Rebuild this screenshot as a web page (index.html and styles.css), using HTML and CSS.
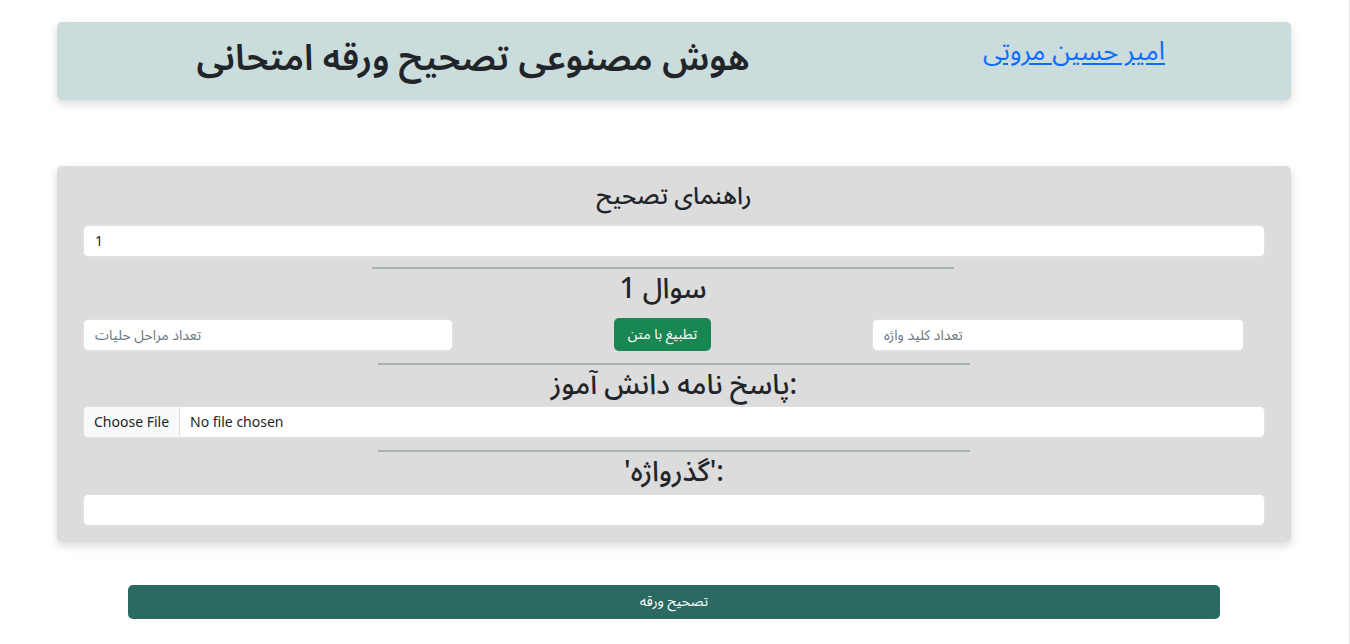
FILE: index.html
```html
<!DOCTYPE html>
<html lang="fa" dir="rtl">
<head>
    <meta charset="UTF-8">
    <meta name="viewport" content="width=device-width, initial-scale=1.0">
    <title>هوش مصنوعی تصحیح ورقه امتحانی</title>
    <link rel="stylesheet" href="styles.css">
</head>
<body>
    <header class="top-card">
        <div class="author"><a href="#">امیر حسین مروتی</a></div>
        <h1 class="title">هوش مصنوعی تصحیح ورقه امتحانی</h1>
    </header>

    <main class="form-card">
        <h3 class="guide-title">راهنمای تصحیح</h3>
        <input type="text" class="field field-ltr" value="1">

        <hr class="divider divider-first">
        <h2 class="question-title">سوال 1</h2>
        <div class="question-row">
            <input type="text" class="field field-ltr" placeholder="تعداد کلید واژه">
            <div class="match-cell">
                <button class="btn-match">تطبیغ با متن</button>
            </div>
            <input type="text" class="field field-ltr" placeholder="تعداد مراحل حلیات">
        </div>

        <hr class="divider">
        <h2 class="section-title" dir="ltr">پاسخ نامه دانش آموز:</h2>
        <div class="file-field" dir="ltr">
            <span class="file-btn">Choose File</span>
            <span class="file-name">No file chosen</span>
        </div>

        <hr class="divider">
        <h2 class="section-title" dir="ltr">'گذرواژه':</h2>
        <input type="password" class="field">
    </main>

    <div class="submit-wrap">
        <button class="btn-submit">تصحیح ورقه</button>
    </div>
</body>
</html>
```

FILE: styles.css
```css
html {
    direction: rtl;
}
body {
    margin: 0;
    padding: 22px 58px 24px 57px;
    font-family: "Noto Sans", "Noto Sans Arabic", "DejaVu Sans", sans-serif;
    color: #212529;
    background: #fff;
    border-right: 1px solid #e6e6e6;
    min-height: 100vh;
    box-sizing: border-box;
}
.top-card {
    background: #cadcdb;
    border-radius: 5px;
    box-shadow: 0 4px 10px rgba(0, 0, 0, 0.15);
    height: 78px;
    display: grid;
    grid-template-columns: 412px 1fr;
}
.author {
    text-align: center;
    padding-top: 2px;
    padding-right: 22px;
}
.author a {
    color: #0d6efd;
    font-size: 26px;
    text-decoration: underline;
    text-underline-offset: 3px;
}
.title {
    margin: 0;
    text-align: center;
    font-size: 36px;
    font-weight: 600;
    padding-top: 13px;
    padding-left: 10px;
    line-height: 1.2;
}
.form-card {
    margin-top: 66px;
    background: #dcdcdc;
    border-radius: 5px;
    box-shadow: 0 4px 10px rgba(0, 0, 0, 0.15);
    padding: 15px 26px 16px 26px;
}
.guide-title {
    margin: 0 0 15px;
    text-align: center;
    font-size: 24px;
    font-weight: 500;
    line-height: 1.2;
}
.field {
    display: block;
    width: 100%;
    box-sizing: border-box;
    height: 32px;
    border: 1px solid #dee2e6;
    border-radius: 5px;
    background: #fff;
    padding: 4px 11px;
    font-family: inherit;
    font-size: 14px;
    color: #212529;
    outline: none;
}
.field::placeholder {
    color: #6c757d;
}
.field-ltr {
    direction: ltr;
    text-align: left;
}
.divider {
    border: 0;
    border-top: 2px solid #a9b4b1;
    margin: 12px auto 0;
    width: 592px;
}
.divider-first {
    width: 582px;
    margin-top: 10px;
    margin-left: 290px;
    margin-right: 311px;
}
.question-title {
    margin: 2px 0 14px;
    text-align: center;
    font-size: 28px;
    font-weight: 500;
    line-height: 1.2;
    padding-right: 22px;
}
.section-title {
    margin: 2px 0 5px;
    text-align: center;
    font-size: 28px;
    font-weight: 500;
    line-height: 1.2;
}
.section-title + .field {
    margin-top: 6px;
}
.question-row {
    display: grid;
    grid-template-columns: 372px 1fr 370px;
    padding-right: 21px;
    align-items: center;
}
.match-cell {
    text-align: center;
}
.btn-match {
    background: #198754;
    color: #fff;
    border: 0;
    border-radius: 5px;
    height: 33px;
    padding: 0 14px;
    font-family: inherit;
    font-size: 14px;
}
.file-field {
    display: flex;
    height: 32px;
    box-sizing: border-box;
    border: 1px solid #dee2e6;
    border-radius: 5px;
    background: #fff;
    overflow: hidden;
    font-size: 14px;
}
.file-btn {
    background: #f8f9fa;
    border-right: 1px solid #dee2e6;
    padding: 0 10px;
    line-height: 30px;
}
.file-name {
    padding: 0 10px;
    line-height: 30px;
}
.submit-wrap {
    padding: 43px 71px 0 71px;
}
.btn-submit {
    display: block;
    width: 100%;
    height: 34px;
    background: #2b6a62;
    color: #fff;
    border: 0;
    border-radius: 5px;
    font-family: inherit;
    font-size: 14px;
}
```
